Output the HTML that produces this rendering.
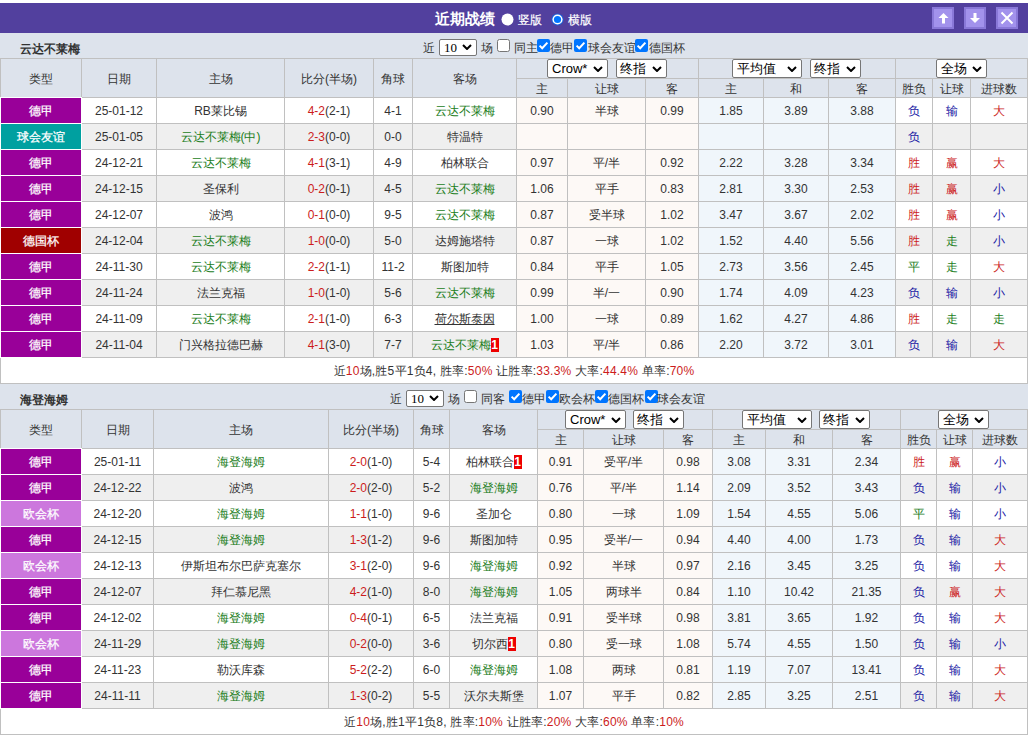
<!DOCTYPE html><html><head><meta charset="utf-8"><style>
*{margin:0;padding:0}
html,body{width:1030px;height:738px;overflow:hidden;background:#fff}
body{position:relative;font-family:"Liberation Sans",sans-serif;font-size:12px;color:#333}
body>div{position:absolute}
.t{text-align:center;white-space:nowrap;overflow:visible}
.bd{display:inline-block;background:#e00;color:#fff;font-weight:bold;height:14px;line-height:14px;width:8px;text-align:center;vertical-align:0px}
</style></head><body><div style="left:0px;top:3px;width:1028px;height:30px;background:#52409e;"></div>
<div class="t" style="left:435px;top:4px;height:30px;line-height:30px;text-align:left;font-weight:bold;font-size:15px;color:#fff;">近期战绩</div>
<svg style="position:absolute;left:501px;top:13px" width="13" height="13"><circle cx="6.5" cy="6.5" r="6" fill="#fff"/></svg>
<div class="t" style="left:518px;top:5px;height:30px;line-height:30px;text-align:left;color:#fff;-webkit-text-stroke:0.2px #fff;">竖版</div>
<svg style="position:absolute;left:551px;top:13px" width="13" height="13"><circle cx="6.5" cy="6.5" r="6.1" fill="#1a5ed6"/><circle cx="6.5" cy="6.5" r="5.1" fill="#fff"/><circle cx="6.5" cy="6.5" r="3.6" fill="#0075ff"/></svg>
<div class="t" style="left:568px;top:5px;height:30px;line-height:30px;text-align:left;color:#fff;-webkit-text-stroke:0.2px #fff;">横版</div>
<div style="left:932px;top:7px;width:22px;height:22px;background:#a292ec;border:2px solid #8978d8;box-sizing:border-box;"></div>
<div style="left:964px;top:7px;width:22px;height:22px;background:#a292ec;border:2px solid #8978d8;box-sizing:border-box;"></div>
<div style="left:996px;top:7px;width:22px;height:22px;background:#a292ec;border:2px solid #8978d8;box-sizing:border-box;"></div>
<svg style="position:absolute;left:932px;top:7px" width="22" height="22"><path d="M6.5 11 L11.5 6 L16.5 11 Z" fill="#fff"/><rect x="10" y="10.5" width="3" height="6" fill="#fff"/></svg>
<svg style="position:absolute;left:964px;top:7px" width="22" height="22"><path d="M6 11 L11 16 L16 11 Z" fill="#fff"/><rect x="9.5" y="6" width="3" height="5.5" fill="#fff"/></svg>
<svg style="position:absolute;left:996px;top:7px" width="22" height="22"><path d="M5.5 5.5 L16.5 16.5 M16.5 5.5 L5.5 16.5" stroke="#fff" stroke-width="2"/></svg>
<div style="left:0px;top:33px;width:1028px;height:25px;background:#dde3ec;"></div>
<div class="t" style="left:20px;top:37px;height:25px;line-height:25px;text-align:left;font-weight:bold;">云达不莱梅</div>
<div class="t" style="left:423px;top:40px;height:16px;line-height:16px;text-align:left;">近</div>
<div style="left:439px;top:39px;width:38px;height:17px;background:#fff;border:1px solid #767676;box-sizing:border-box;border-radius:2px;"></div>
<div class="t" style="left:444px;top:39px;height:17px;line-height:17px;font-size:13px;color:#000;text-align:left;font-family:'Liberation Serif',serif;font-size:13px;">10</div>
<svg style="position:absolute;left:462px;top:44px" width="10" height="6" viewBox="0 0 10 6"><path d="M1 1 L5 5 L9 1" fill="none" stroke="#000" stroke-width="2"/></svg>
<div class="t" style="left:481px;top:40px;height:16px;line-height:16px;text-align:left;">场</div>
<svg style="position:absolute;left:497px;top:39px" width="13" height="13" viewBox="0 0 13 13"><rect x="0.5" y="0.5" width="12" height="12" rx="2" fill="#fff" stroke="#767676"/></svg>
<div class="t" style="left:514px;top:40px;height:16px;line-height:16px;text-align:left;">同主</div>
<svg style="position:absolute;left:537px;top:39px" width="13" height="13" viewBox="0 0 13 13"><rect x="0" y="0" width="13" height="13" rx="2" fill="#0075ff"/><path d="M2.6 6.6 L5.2 9.2 L10.4 3.6" fill="none" stroke="#fff" stroke-width="2"/></svg>
<div class="t" style="left:550px;top:40px;height:16px;line-height:16px;text-align:left;">德甲</div>
<svg style="position:absolute;left:574px;top:39px" width="13" height="13" viewBox="0 0 13 13"><rect x="0" y="0" width="13" height="13" rx="2" fill="#0075ff"/><path d="M2.6 6.6 L5.2 9.2 L10.4 3.6" fill="none" stroke="#fff" stroke-width="2"/></svg>
<div class="t" style="left:588px;top:40px;height:16px;line-height:16px;text-align:left;">球会友谊</div>
<svg style="position:absolute;left:635px;top:39px" width="13" height="13" viewBox="0 0 13 13"><rect x="0" y="0" width="13" height="13" rx="2" fill="#0075ff"/><path d="M2.6 6.6 L5.2 9.2 L10.4 3.6" fill="none" stroke="#fff" stroke-width="2"/></svg>
<div class="t" style="left:649px;top:40px;height:16px;line-height:16px;text-align:left;">德国杯</div>
<div style="left:0px;top:58px;width:1028px;height:39px;background:#dde3ec;"></div>
<div class="t" style="left:1px;top:60px;width:80px;height:38px;line-height:38px;">类型</div>
<div class="t" style="left:82px;top:60px;width:74px;height:38px;line-height:38px;">日期</div>
<div class="t" style="left:157px;top:60px;width:127px;height:38px;line-height:38px;">主场</div>
<div class="t" style="left:285px;top:60px;width:88px;height:38px;line-height:38px;">比分(半场)</div>
<div class="t" style="left:374px;top:60px;width:38px;height:38px;line-height:38px;">角球</div>
<div class="t" style="left:413px;top:60px;width:103px;height:38px;line-height:38px;">客场</div>
<div class="t" style="left:517px;top:80px;width:50px;height:18px;line-height:18px;">主</div>
<div class="t" style="left:568px;top:80px;width:77px;height:18px;line-height:18px;">让球</div>
<div class="t" style="left:646px;top:80px;width:52px;height:18px;line-height:18px;">客</div>
<div class="t" style="left:699px;top:80px;width:64px;height:18px;line-height:18px;">主</div>
<div class="t" style="left:764px;top:80px;width:64px;height:18px;line-height:18px;">和</div>
<div class="t" style="left:829px;top:80px;width:66px;height:18px;line-height:18px;">客</div>
<div class="t" style="left:896px;top:80px;width:36px;height:18px;line-height:18px;">胜负</div>
<div class="t" style="left:933px;top:80px;width:37px;height:18px;line-height:18px;">让球</div>
<div class="t" style="left:971px;top:80px;width:56px;height:18px;line-height:18px;">进球数</div>
<div style="left:1px;top:98px;width:80px;height:25px;background:#990099;"></div>
<div style="left:82px;top:98px;width:74px;height:25px;background:#ffffff;"></div>
<div style="left:157px;top:98px;width:127px;height:25px;background:#ffffff;"></div>
<div style="left:285px;top:98px;width:88px;height:25px;background:#ffffff;"></div>
<div style="left:374px;top:98px;width:38px;height:25px;background:#ffffff;"></div>
<div style="left:413px;top:98px;width:103px;height:25px;background:#ffffff;"></div>
<div style="left:517px;top:98px;width:50px;height:25px;background:#fdf9f6;"></div>
<div style="left:568px;top:98px;width:77px;height:25px;background:#fdf9f6;"></div>
<div style="left:646px;top:98px;width:52px;height:25px;background:#fdf9f6;"></div>
<div style="left:699px;top:98px;width:64px;height:25px;background:#f0f6fb;"></div>
<div style="left:764px;top:98px;width:64px;height:25px;background:#f0f6fb;"></div>
<div style="left:829px;top:98px;width:66px;height:25px;background:#f0f6fb;"></div>
<div style="left:896px;top:98px;width:36px;height:25px;background:#ffffff;"></div>
<div style="left:933px;top:98px;width:37px;height:25px;background:#ffffff;"></div>
<div style="left:971px;top:98px;width:56px;height:25px;background:#ffffff;"></div>
<div class="t" style="left:1px;top:99px;width:80px;height:25px;line-height:25px;color:#fff;-webkit-text-stroke:0.25px #fff;">德甲</div>
<div class="t" style="left:82px;top:99px;width:74px;height:25px;line-height:25px;">25-01-12</div>
<div class="t" style="left:157px;top:99px;width:127px;height:25px;line-height:25px;">RB莱比锡</div>
<div class="t" style="left:285px;top:99px;width:88px;height:25px;line-height:25px;"><span style="color:#cc1c1c">4-2</span>(2-1)</div>
<div class="t" style="left:374px;top:99px;width:38px;height:25px;line-height:25px;">4-1</div>
<div class="t" style="left:413px;top:99px;width:103px;height:25px;line-height:25px;"><span style="color:#1a7d1a;">云达不莱梅</span></div>
<div class="t" style="left:517px;top:99px;width:50px;height:25px;line-height:25px;">0.90</div>
<div class="t" style="left:568px;top:99px;width:77px;height:25px;line-height:25px;">半球</div>
<div class="t" style="left:646px;top:99px;width:52px;height:25px;line-height:25px;">0.99</div>
<div class="t" style="left:699px;top:99px;width:64px;height:25px;line-height:25px;">1.85</div>
<div class="t" style="left:764px;top:99px;width:64px;height:25px;line-height:25px;">3.89</div>
<div class="t" style="left:829px;top:99px;width:66px;height:25px;line-height:25px;">3.88</div>
<div class="t" style="left:896px;top:99px;width:36px;height:25px;line-height:25px;color:#1818a4;">负</div>
<div class="t" style="left:933px;top:99px;width:37px;height:25px;line-height:25px;color:#1818a4;">输</div>
<div class="t" style="left:971px;top:99px;width:56px;height:25px;line-height:25px;color:#cc1c1c;">大</div>
<div style="left:1px;top:124px;width:80px;height:25px;background:#00a0a0;"></div>
<div style="left:82px;top:124px;width:74px;height:25px;background:#efefef;"></div>
<div style="left:157px;top:124px;width:127px;height:25px;background:#efefef;"></div>
<div style="left:285px;top:124px;width:88px;height:25px;background:#efefef;"></div>
<div style="left:374px;top:124px;width:38px;height:25px;background:#efefef;"></div>
<div style="left:413px;top:124px;width:103px;height:25px;background:#efefef;"></div>
<div style="left:517px;top:124px;width:50px;height:25px;background:#fdf9f6;"></div>
<div style="left:568px;top:124px;width:77px;height:25px;background:#fdf9f6;"></div>
<div style="left:646px;top:124px;width:52px;height:25px;background:#fdf9f6;"></div>
<div style="left:699px;top:124px;width:64px;height:25px;background:#f0f6fb;"></div>
<div style="left:764px;top:124px;width:64px;height:25px;background:#f0f6fb;"></div>
<div style="left:829px;top:124px;width:66px;height:25px;background:#f0f6fb;"></div>
<div style="left:896px;top:124px;width:36px;height:25px;background:#efefef;"></div>
<div style="left:933px;top:124px;width:37px;height:25px;background:#efefef;"></div>
<div style="left:971px;top:124px;width:56px;height:25px;background:#efefef;"></div>
<div class="t" style="left:1px;top:125px;width:80px;height:25px;line-height:25px;color:#fff;-webkit-text-stroke:0.25px #fff;">球会友谊</div>
<div class="t" style="left:82px;top:125px;width:74px;height:25px;line-height:25px;">25-01-05</div>
<div class="t" style="left:157px;top:125px;width:127px;height:25px;line-height:25px;"><span style="color:#1a7d1a;">云达不莱梅(中)</span></div>
<div class="t" style="left:285px;top:125px;width:88px;height:25px;line-height:25px;"><span style="color:#cc1c1c">2-3</span>(0-0)</div>
<div class="t" style="left:374px;top:125px;width:38px;height:25px;line-height:25px;">0-0</div>
<div class="t" style="left:413px;top:125px;width:103px;height:25px;line-height:25px;">特温特</div>
<div class="t" style="left:517px;top:125px;width:50px;height:25px;line-height:25px;"></div>
<div class="t" style="left:568px;top:125px;width:77px;height:25px;line-height:25px;"></div>
<div class="t" style="left:646px;top:125px;width:52px;height:25px;line-height:25px;"></div>
<div class="t" style="left:699px;top:125px;width:64px;height:25px;line-height:25px;"></div>
<div class="t" style="left:764px;top:125px;width:64px;height:25px;line-height:25px;"></div>
<div class="t" style="left:829px;top:125px;width:66px;height:25px;line-height:25px;"></div>
<div class="t" style="left:896px;top:125px;width:36px;height:25px;line-height:25px;color:#1818a4;">负</div>
<div class="t" style="left:933px;top:125px;width:37px;height:25px;line-height:25px;color:#333333;"></div>
<div class="t" style="left:971px;top:125px;width:56px;height:25px;line-height:25px;color:#333333;"></div>
<div style="left:1px;top:150px;width:80px;height:25px;background:#990099;"></div>
<div style="left:82px;top:150px;width:74px;height:25px;background:#ffffff;"></div>
<div style="left:157px;top:150px;width:127px;height:25px;background:#ffffff;"></div>
<div style="left:285px;top:150px;width:88px;height:25px;background:#ffffff;"></div>
<div style="left:374px;top:150px;width:38px;height:25px;background:#ffffff;"></div>
<div style="left:413px;top:150px;width:103px;height:25px;background:#ffffff;"></div>
<div style="left:517px;top:150px;width:50px;height:25px;background:#fdf9f6;"></div>
<div style="left:568px;top:150px;width:77px;height:25px;background:#fdf9f6;"></div>
<div style="left:646px;top:150px;width:52px;height:25px;background:#fdf9f6;"></div>
<div style="left:699px;top:150px;width:64px;height:25px;background:#f0f6fb;"></div>
<div style="left:764px;top:150px;width:64px;height:25px;background:#f0f6fb;"></div>
<div style="left:829px;top:150px;width:66px;height:25px;background:#f0f6fb;"></div>
<div style="left:896px;top:150px;width:36px;height:25px;background:#ffffff;"></div>
<div style="left:933px;top:150px;width:37px;height:25px;background:#ffffff;"></div>
<div style="left:971px;top:150px;width:56px;height:25px;background:#ffffff;"></div>
<div class="t" style="left:1px;top:151px;width:80px;height:25px;line-height:25px;color:#fff;-webkit-text-stroke:0.25px #fff;">德甲</div>
<div class="t" style="left:82px;top:151px;width:74px;height:25px;line-height:25px;">24-12-21</div>
<div class="t" style="left:157px;top:151px;width:127px;height:25px;line-height:25px;"><span style="color:#1a7d1a;">云达不莱梅</span></div>
<div class="t" style="left:285px;top:151px;width:88px;height:25px;line-height:25px;"><span style="color:#cc1c1c">4-1</span>(3-1)</div>
<div class="t" style="left:374px;top:151px;width:38px;height:25px;line-height:25px;">4-9</div>
<div class="t" style="left:413px;top:151px;width:103px;height:25px;line-height:25px;">柏林联合</div>
<div class="t" style="left:517px;top:151px;width:50px;height:25px;line-height:25px;">0.97</div>
<div class="t" style="left:568px;top:151px;width:77px;height:25px;line-height:25px;">平/半</div>
<div class="t" style="left:646px;top:151px;width:52px;height:25px;line-height:25px;">0.92</div>
<div class="t" style="left:699px;top:151px;width:64px;height:25px;line-height:25px;">2.22</div>
<div class="t" style="left:764px;top:151px;width:64px;height:25px;line-height:25px;">3.28</div>
<div class="t" style="left:829px;top:151px;width:66px;height:25px;line-height:25px;">3.34</div>
<div class="t" style="left:896px;top:151px;width:36px;height:25px;line-height:25px;color:#cc1c1c;">胜</div>
<div class="t" style="left:933px;top:151px;width:37px;height:25px;line-height:25px;color:#cc1c1c;">赢</div>
<div class="t" style="left:971px;top:151px;width:56px;height:25px;line-height:25px;color:#cc1c1c;">大</div>
<div style="left:1px;top:176px;width:80px;height:25px;background:#990099;"></div>
<div style="left:82px;top:176px;width:74px;height:25px;background:#efefef;"></div>
<div style="left:157px;top:176px;width:127px;height:25px;background:#efefef;"></div>
<div style="left:285px;top:176px;width:88px;height:25px;background:#efefef;"></div>
<div style="left:374px;top:176px;width:38px;height:25px;background:#efefef;"></div>
<div style="left:413px;top:176px;width:103px;height:25px;background:#efefef;"></div>
<div style="left:517px;top:176px;width:50px;height:25px;background:#fdf9f6;"></div>
<div style="left:568px;top:176px;width:77px;height:25px;background:#fdf9f6;"></div>
<div style="left:646px;top:176px;width:52px;height:25px;background:#fdf9f6;"></div>
<div style="left:699px;top:176px;width:64px;height:25px;background:#f0f6fb;"></div>
<div style="left:764px;top:176px;width:64px;height:25px;background:#f0f6fb;"></div>
<div style="left:829px;top:176px;width:66px;height:25px;background:#f0f6fb;"></div>
<div style="left:896px;top:176px;width:36px;height:25px;background:#efefef;"></div>
<div style="left:933px;top:176px;width:37px;height:25px;background:#efefef;"></div>
<div style="left:971px;top:176px;width:56px;height:25px;background:#efefef;"></div>
<div class="t" style="left:1px;top:177px;width:80px;height:25px;line-height:25px;color:#fff;-webkit-text-stroke:0.25px #fff;">德甲</div>
<div class="t" style="left:82px;top:177px;width:74px;height:25px;line-height:25px;">24-12-15</div>
<div class="t" style="left:157px;top:177px;width:127px;height:25px;line-height:25px;">圣保利</div>
<div class="t" style="left:285px;top:177px;width:88px;height:25px;line-height:25px;"><span style="color:#cc1c1c">0-2</span>(0-1)</div>
<div class="t" style="left:374px;top:177px;width:38px;height:25px;line-height:25px;">4-5</div>
<div class="t" style="left:413px;top:177px;width:103px;height:25px;line-height:25px;"><span style="color:#1a7d1a;">云达不莱梅</span></div>
<div class="t" style="left:517px;top:177px;width:50px;height:25px;line-height:25px;">1.06</div>
<div class="t" style="left:568px;top:177px;width:77px;height:25px;line-height:25px;">平手</div>
<div class="t" style="left:646px;top:177px;width:52px;height:25px;line-height:25px;">0.83</div>
<div class="t" style="left:699px;top:177px;width:64px;height:25px;line-height:25px;">2.81</div>
<div class="t" style="left:764px;top:177px;width:64px;height:25px;line-height:25px;">3.30</div>
<div class="t" style="left:829px;top:177px;width:66px;height:25px;line-height:25px;">2.53</div>
<div class="t" style="left:896px;top:177px;width:36px;height:25px;line-height:25px;color:#cc1c1c;">胜</div>
<div class="t" style="left:933px;top:177px;width:37px;height:25px;line-height:25px;color:#cc1c1c;">赢</div>
<div class="t" style="left:971px;top:177px;width:56px;height:25px;line-height:25px;color:#1818a4;">小</div>
<div style="left:1px;top:202px;width:80px;height:25px;background:#990099;"></div>
<div style="left:82px;top:202px;width:74px;height:25px;background:#ffffff;"></div>
<div style="left:157px;top:202px;width:127px;height:25px;background:#ffffff;"></div>
<div style="left:285px;top:202px;width:88px;height:25px;background:#ffffff;"></div>
<div style="left:374px;top:202px;width:38px;height:25px;background:#ffffff;"></div>
<div style="left:413px;top:202px;width:103px;height:25px;background:#ffffff;"></div>
<div style="left:517px;top:202px;width:50px;height:25px;background:#fdf9f6;"></div>
<div style="left:568px;top:202px;width:77px;height:25px;background:#fdf9f6;"></div>
<div style="left:646px;top:202px;width:52px;height:25px;background:#fdf9f6;"></div>
<div style="left:699px;top:202px;width:64px;height:25px;background:#f0f6fb;"></div>
<div style="left:764px;top:202px;width:64px;height:25px;background:#f0f6fb;"></div>
<div style="left:829px;top:202px;width:66px;height:25px;background:#f0f6fb;"></div>
<div style="left:896px;top:202px;width:36px;height:25px;background:#ffffff;"></div>
<div style="left:933px;top:202px;width:37px;height:25px;background:#ffffff;"></div>
<div style="left:971px;top:202px;width:56px;height:25px;background:#ffffff;"></div>
<div class="t" style="left:1px;top:203px;width:80px;height:25px;line-height:25px;color:#fff;-webkit-text-stroke:0.25px #fff;">德甲</div>
<div class="t" style="left:82px;top:203px;width:74px;height:25px;line-height:25px;">24-12-07</div>
<div class="t" style="left:157px;top:203px;width:127px;height:25px;line-height:25px;">波鸿</div>
<div class="t" style="left:285px;top:203px;width:88px;height:25px;line-height:25px;"><span style="color:#cc1c1c">0-1</span>(0-0)</div>
<div class="t" style="left:374px;top:203px;width:38px;height:25px;line-height:25px;">9-5</div>
<div class="t" style="left:413px;top:203px;width:103px;height:25px;line-height:25px;"><span style="color:#1a7d1a;">云达不莱梅</span></div>
<div class="t" style="left:517px;top:203px;width:50px;height:25px;line-height:25px;">0.87</div>
<div class="t" style="left:568px;top:203px;width:77px;height:25px;line-height:25px;">受半球</div>
<div class="t" style="left:646px;top:203px;width:52px;height:25px;line-height:25px;">1.02</div>
<div class="t" style="left:699px;top:203px;width:64px;height:25px;line-height:25px;">3.47</div>
<div class="t" style="left:764px;top:203px;width:64px;height:25px;line-height:25px;">3.67</div>
<div class="t" style="left:829px;top:203px;width:66px;height:25px;line-height:25px;">2.02</div>
<div class="t" style="left:896px;top:203px;width:36px;height:25px;line-height:25px;color:#cc1c1c;">胜</div>
<div class="t" style="left:933px;top:203px;width:37px;height:25px;line-height:25px;color:#cc1c1c;">赢</div>
<div class="t" style="left:971px;top:203px;width:56px;height:25px;line-height:25px;color:#1818a4;">小</div>
<div style="left:1px;top:228px;width:80px;height:25px;background:#a00000;"></div>
<div style="left:82px;top:228px;width:74px;height:25px;background:#efefef;"></div>
<div style="left:157px;top:228px;width:127px;height:25px;background:#efefef;"></div>
<div style="left:285px;top:228px;width:88px;height:25px;background:#efefef;"></div>
<div style="left:374px;top:228px;width:38px;height:25px;background:#efefef;"></div>
<div style="left:413px;top:228px;width:103px;height:25px;background:#efefef;"></div>
<div style="left:517px;top:228px;width:50px;height:25px;background:#fdf9f6;"></div>
<div style="left:568px;top:228px;width:77px;height:25px;background:#fdf9f6;"></div>
<div style="left:646px;top:228px;width:52px;height:25px;background:#fdf9f6;"></div>
<div style="left:699px;top:228px;width:64px;height:25px;background:#f0f6fb;"></div>
<div style="left:764px;top:228px;width:64px;height:25px;background:#f0f6fb;"></div>
<div style="left:829px;top:228px;width:66px;height:25px;background:#f0f6fb;"></div>
<div style="left:896px;top:228px;width:36px;height:25px;background:#efefef;"></div>
<div style="left:933px;top:228px;width:37px;height:25px;background:#efefef;"></div>
<div style="left:971px;top:228px;width:56px;height:25px;background:#efefef;"></div>
<div class="t" style="left:1px;top:229px;width:80px;height:25px;line-height:25px;color:#fff;-webkit-text-stroke:0.25px #fff;">德国杯</div>
<div class="t" style="left:82px;top:229px;width:74px;height:25px;line-height:25px;">24-12-04</div>
<div class="t" style="left:157px;top:229px;width:127px;height:25px;line-height:25px;"><span style="color:#1a7d1a;">云达不莱梅</span></div>
<div class="t" style="left:285px;top:229px;width:88px;height:25px;line-height:25px;"><span style="color:#cc1c1c">1-0</span>(0-0)</div>
<div class="t" style="left:374px;top:229px;width:38px;height:25px;line-height:25px;">5-0</div>
<div class="t" style="left:413px;top:229px;width:103px;height:25px;line-height:25px;">达姆施塔特</div>
<div class="t" style="left:517px;top:229px;width:50px;height:25px;line-height:25px;">0.87</div>
<div class="t" style="left:568px;top:229px;width:77px;height:25px;line-height:25px;">一球</div>
<div class="t" style="left:646px;top:229px;width:52px;height:25px;line-height:25px;">1.02</div>
<div class="t" style="left:699px;top:229px;width:64px;height:25px;line-height:25px;">1.52</div>
<div class="t" style="left:764px;top:229px;width:64px;height:25px;line-height:25px;">4.40</div>
<div class="t" style="left:829px;top:229px;width:66px;height:25px;line-height:25px;">5.56</div>
<div class="t" style="left:896px;top:229px;width:36px;height:25px;line-height:25px;color:#cc1c1c;">胜</div>
<div class="t" style="left:933px;top:229px;width:37px;height:25px;line-height:25px;color:#1a7d1a;">走</div>
<div class="t" style="left:971px;top:229px;width:56px;height:25px;line-height:25px;color:#1818a4;">小</div>
<div style="left:1px;top:254px;width:80px;height:25px;background:#990099;"></div>
<div style="left:82px;top:254px;width:74px;height:25px;background:#ffffff;"></div>
<div style="left:157px;top:254px;width:127px;height:25px;background:#ffffff;"></div>
<div style="left:285px;top:254px;width:88px;height:25px;background:#ffffff;"></div>
<div style="left:374px;top:254px;width:38px;height:25px;background:#ffffff;"></div>
<div style="left:413px;top:254px;width:103px;height:25px;background:#ffffff;"></div>
<div style="left:517px;top:254px;width:50px;height:25px;background:#fdf9f6;"></div>
<div style="left:568px;top:254px;width:77px;height:25px;background:#fdf9f6;"></div>
<div style="left:646px;top:254px;width:52px;height:25px;background:#fdf9f6;"></div>
<div style="left:699px;top:254px;width:64px;height:25px;background:#f0f6fb;"></div>
<div style="left:764px;top:254px;width:64px;height:25px;background:#f0f6fb;"></div>
<div style="left:829px;top:254px;width:66px;height:25px;background:#f0f6fb;"></div>
<div style="left:896px;top:254px;width:36px;height:25px;background:#ffffff;"></div>
<div style="left:933px;top:254px;width:37px;height:25px;background:#ffffff;"></div>
<div style="left:971px;top:254px;width:56px;height:25px;background:#ffffff;"></div>
<div class="t" style="left:1px;top:255px;width:80px;height:25px;line-height:25px;color:#fff;-webkit-text-stroke:0.25px #fff;">德甲</div>
<div class="t" style="left:82px;top:255px;width:74px;height:25px;line-height:25px;">24-11-30</div>
<div class="t" style="left:157px;top:255px;width:127px;height:25px;line-height:25px;"><span style="color:#1a7d1a;">云达不莱梅</span></div>
<div class="t" style="left:285px;top:255px;width:88px;height:25px;line-height:25px;"><span style="color:#cc1c1c">2-2</span>(1-1)</div>
<div class="t" style="left:374px;top:255px;width:38px;height:25px;line-height:25px;">11-2</div>
<div class="t" style="left:413px;top:255px;width:103px;height:25px;line-height:25px;">斯图加特</div>
<div class="t" style="left:517px;top:255px;width:50px;height:25px;line-height:25px;">0.84</div>
<div class="t" style="left:568px;top:255px;width:77px;height:25px;line-height:25px;">平手</div>
<div class="t" style="left:646px;top:255px;width:52px;height:25px;line-height:25px;">1.05</div>
<div class="t" style="left:699px;top:255px;width:64px;height:25px;line-height:25px;">2.73</div>
<div class="t" style="left:764px;top:255px;width:64px;height:25px;line-height:25px;">3.56</div>
<div class="t" style="left:829px;top:255px;width:66px;height:25px;line-height:25px;">2.45</div>
<div class="t" style="left:896px;top:255px;width:36px;height:25px;line-height:25px;color:#1a7d1a;">平</div>
<div class="t" style="left:933px;top:255px;width:37px;height:25px;line-height:25px;color:#1a7d1a;">走</div>
<div class="t" style="left:971px;top:255px;width:56px;height:25px;line-height:25px;color:#cc1c1c;">大</div>
<div style="left:1px;top:280px;width:80px;height:25px;background:#990099;"></div>
<div style="left:82px;top:280px;width:74px;height:25px;background:#efefef;"></div>
<div style="left:157px;top:280px;width:127px;height:25px;background:#efefef;"></div>
<div style="left:285px;top:280px;width:88px;height:25px;background:#efefef;"></div>
<div style="left:374px;top:280px;width:38px;height:25px;background:#efefef;"></div>
<div style="left:413px;top:280px;width:103px;height:25px;background:#efefef;"></div>
<div style="left:517px;top:280px;width:50px;height:25px;background:#fdf9f6;"></div>
<div style="left:568px;top:280px;width:77px;height:25px;background:#fdf9f6;"></div>
<div style="left:646px;top:280px;width:52px;height:25px;background:#fdf9f6;"></div>
<div style="left:699px;top:280px;width:64px;height:25px;background:#f0f6fb;"></div>
<div style="left:764px;top:280px;width:64px;height:25px;background:#f0f6fb;"></div>
<div style="left:829px;top:280px;width:66px;height:25px;background:#f0f6fb;"></div>
<div style="left:896px;top:280px;width:36px;height:25px;background:#efefef;"></div>
<div style="left:933px;top:280px;width:37px;height:25px;background:#efefef;"></div>
<div style="left:971px;top:280px;width:56px;height:25px;background:#efefef;"></div>
<div class="t" style="left:1px;top:281px;width:80px;height:25px;line-height:25px;color:#fff;-webkit-text-stroke:0.25px #fff;">德甲</div>
<div class="t" style="left:82px;top:281px;width:74px;height:25px;line-height:25px;">24-11-24</div>
<div class="t" style="left:157px;top:281px;width:127px;height:25px;line-height:25px;">法兰克福</div>
<div class="t" style="left:285px;top:281px;width:88px;height:25px;line-height:25px;"><span style="color:#cc1c1c">1-0</span>(1-0)</div>
<div class="t" style="left:374px;top:281px;width:38px;height:25px;line-height:25px;">5-6</div>
<div class="t" style="left:413px;top:281px;width:103px;height:25px;line-height:25px;"><span style="color:#1a7d1a;">云达不莱梅</span></div>
<div class="t" style="left:517px;top:281px;width:50px;height:25px;line-height:25px;">0.99</div>
<div class="t" style="left:568px;top:281px;width:77px;height:25px;line-height:25px;">半/一</div>
<div class="t" style="left:646px;top:281px;width:52px;height:25px;line-height:25px;">0.90</div>
<div class="t" style="left:699px;top:281px;width:64px;height:25px;line-height:25px;">1.74</div>
<div class="t" style="left:764px;top:281px;width:64px;height:25px;line-height:25px;">4.09</div>
<div class="t" style="left:829px;top:281px;width:66px;height:25px;line-height:25px;">4.23</div>
<div class="t" style="left:896px;top:281px;width:36px;height:25px;line-height:25px;color:#1818a4;">负</div>
<div class="t" style="left:933px;top:281px;width:37px;height:25px;line-height:25px;color:#1818a4;">输</div>
<div class="t" style="left:971px;top:281px;width:56px;height:25px;line-height:25px;color:#1818a4;">小</div>
<div style="left:1px;top:306px;width:80px;height:25px;background:#990099;"></div>
<div style="left:82px;top:306px;width:74px;height:25px;background:#ffffff;"></div>
<div style="left:157px;top:306px;width:127px;height:25px;background:#ffffff;"></div>
<div style="left:285px;top:306px;width:88px;height:25px;background:#ffffff;"></div>
<div style="left:374px;top:306px;width:38px;height:25px;background:#ffffff;"></div>
<div style="left:413px;top:306px;width:103px;height:25px;background:#ffffff;"></div>
<div style="left:517px;top:306px;width:50px;height:25px;background:#fdf9f6;"></div>
<div style="left:568px;top:306px;width:77px;height:25px;background:#fdf9f6;"></div>
<div style="left:646px;top:306px;width:52px;height:25px;background:#fdf9f6;"></div>
<div style="left:699px;top:306px;width:64px;height:25px;background:#f0f6fb;"></div>
<div style="left:764px;top:306px;width:64px;height:25px;background:#f0f6fb;"></div>
<div style="left:829px;top:306px;width:66px;height:25px;background:#f0f6fb;"></div>
<div style="left:896px;top:306px;width:36px;height:25px;background:#ffffff;"></div>
<div style="left:933px;top:306px;width:37px;height:25px;background:#ffffff;"></div>
<div style="left:971px;top:306px;width:56px;height:25px;background:#ffffff;"></div>
<div class="t" style="left:1px;top:307px;width:80px;height:25px;line-height:25px;color:#fff;-webkit-text-stroke:0.25px #fff;">德甲</div>
<div class="t" style="left:82px;top:307px;width:74px;height:25px;line-height:25px;">24-11-09</div>
<div class="t" style="left:157px;top:307px;width:127px;height:25px;line-height:25px;"><span style="color:#1a7d1a;">云达不莱梅</span></div>
<div class="t" style="left:285px;top:307px;width:88px;height:25px;line-height:25px;"><span style="color:#cc1c1c">2-1</span>(1-0)</div>
<div class="t" style="left:374px;top:307px;width:38px;height:25px;line-height:25px;">6-3</div>
<div class="t" style="left:413px;top:307px;width:103px;height:25px;line-height:25px;"><span style="text-decoration:underline;">荷尔斯泰因</span></div>
<div class="t" style="left:517px;top:307px;width:50px;height:25px;line-height:25px;">1.00</div>
<div class="t" style="left:568px;top:307px;width:77px;height:25px;line-height:25px;">一球</div>
<div class="t" style="left:646px;top:307px;width:52px;height:25px;line-height:25px;">0.89</div>
<div class="t" style="left:699px;top:307px;width:64px;height:25px;line-height:25px;">1.62</div>
<div class="t" style="left:764px;top:307px;width:64px;height:25px;line-height:25px;">4.27</div>
<div class="t" style="left:829px;top:307px;width:66px;height:25px;line-height:25px;">4.86</div>
<div class="t" style="left:896px;top:307px;width:36px;height:25px;line-height:25px;color:#cc1c1c;">胜</div>
<div class="t" style="left:933px;top:307px;width:37px;height:25px;line-height:25px;color:#1a7d1a;">走</div>
<div class="t" style="left:971px;top:307px;width:56px;height:25px;line-height:25px;color:#1a7d1a;">走</div>
<div style="left:1px;top:332px;width:80px;height:25px;background:#990099;"></div>
<div style="left:82px;top:332px;width:74px;height:25px;background:#efefef;"></div>
<div style="left:157px;top:332px;width:127px;height:25px;background:#efefef;"></div>
<div style="left:285px;top:332px;width:88px;height:25px;background:#efefef;"></div>
<div style="left:374px;top:332px;width:38px;height:25px;background:#efefef;"></div>
<div style="left:413px;top:332px;width:103px;height:25px;background:#efefef;"></div>
<div style="left:517px;top:332px;width:50px;height:25px;background:#fdf9f6;"></div>
<div style="left:568px;top:332px;width:77px;height:25px;background:#fdf9f6;"></div>
<div style="left:646px;top:332px;width:52px;height:25px;background:#fdf9f6;"></div>
<div style="left:699px;top:332px;width:64px;height:25px;background:#f0f6fb;"></div>
<div style="left:764px;top:332px;width:64px;height:25px;background:#f0f6fb;"></div>
<div style="left:829px;top:332px;width:66px;height:25px;background:#f0f6fb;"></div>
<div style="left:896px;top:332px;width:36px;height:25px;background:#efefef;"></div>
<div style="left:933px;top:332px;width:37px;height:25px;background:#efefef;"></div>
<div style="left:971px;top:332px;width:56px;height:25px;background:#efefef;"></div>
<div class="t" style="left:1px;top:333px;width:80px;height:25px;line-height:25px;color:#fff;-webkit-text-stroke:0.25px #fff;">德甲</div>
<div class="t" style="left:82px;top:333px;width:74px;height:25px;line-height:25px;">24-11-04</div>
<div class="t" style="left:157px;top:333px;width:127px;height:25px;line-height:25px;">门兴格拉德巴赫</div>
<div class="t" style="left:285px;top:333px;width:88px;height:25px;line-height:25px;"><span style="color:#cc1c1c">4-1</span>(3-0)</div>
<div class="t" style="left:374px;top:333px;width:38px;height:25px;line-height:25px;">7-7</div>
<div class="t" style="left:413px;top:333px;width:103px;height:25px;line-height:25px;"><span style="color:#1a7d1a;">云达不莱梅</span><span class="bd">1</span></div>
<div class="t" style="left:517px;top:333px;width:50px;height:25px;line-height:25px;">1.03</div>
<div class="t" style="left:568px;top:333px;width:77px;height:25px;line-height:25px;">平/半</div>
<div class="t" style="left:646px;top:333px;width:52px;height:25px;line-height:25px;">0.86</div>
<div class="t" style="left:699px;top:333px;width:64px;height:25px;line-height:25px;">2.20</div>
<div class="t" style="left:764px;top:333px;width:64px;height:25px;line-height:25px;">3.72</div>
<div class="t" style="left:829px;top:333px;width:66px;height:25px;line-height:25px;">3.01</div>
<div class="t" style="left:896px;top:333px;width:36px;height:25px;line-height:25px;color:#1818a4;">负</div>
<div class="t" style="left:933px;top:333px;width:37px;height:25px;line-height:25px;color:#1818a4;">输</div>
<div class="t" style="left:971px;top:333px;width:56px;height:25px;line-height:25px;color:#cc1c1c;">大</div>
<div style="left:1px;top:358px;width:1026px;height:25px;background:#fff;"></div>
<div class="t" style="left:1px;top:359px;width:1026px;height:25px;line-height:25px;letter-spacing:0.22px;">近<span style="color:#cc1c1c">10</span>场,胜5平1负4, 胜率:<span style="color:#cc1c1c">50%</span> 让胜率:<span style="color:#cc1c1c">33.3%</span> 大率:<span style="color:#cc1c1c">44.4%</span> 单率:<span style="color:#cc1c1c">70%</span></div>
<div style="left:0px;top:58px;width:1028px;height:1px;background:#c0c0c0;"></div>
<div style="left:0px;top:97px;width:1028px;height:1px;background:#c0c0c0;"></div>
<div style="left:516px;top:78px;width:512px;height:1px;background:#c0c0c0;"></div>
<div style="left:0px;top:123px;width:1028px;height:1px;background:#c0c0c0;"></div>
<div style="left:0px;top:149px;width:1028px;height:1px;background:#c0c0c0;"></div>
<div style="left:0px;top:175px;width:1028px;height:1px;background:#c0c0c0;"></div>
<div style="left:0px;top:201px;width:1028px;height:1px;background:#c0c0c0;"></div>
<div style="left:0px;top:227px;width:1028px;height:1px;background:#c0c0c0;"></div>
<div style="left:0px;top:253px;width:1028px;height:1px;background:#c0c0c0;"></div>
<div style="left:0px;top:279px;width:1028px;height:1px;background:#c0c0c0;"></div>
<div style="left:0px;top:305px;width:1028px;height:1px;background:#c0c0c0;"></div>
<div style="left:0px;top:331px;width:1028px;height:1px;background:#c0c0c0;"></div>
<div style="left:0px;top:357px;width:1028px;height:1px;background:#c0c0c0;"></div>
<div style="left:0px;top:383px;width:1028px;height:1px;background:#c0c0c0;"></div>
<div style="left:0px;top:58px;width:1px;height:326px;background:#c0c0c0;"></div>
<div style="left:1027px;top:58px;width:1px;height:326px;background:#c0c0c0;"></div>
<div style="left:81px;top:58px;width:1px;height:300px;background:#c0c0c0;"></div>
<div style="left:156px;top:58px;width:1px;height:300px;background:#c0c0c0;"></div>
<div style="left:284px;top:58px;width:1px;height:300px;background:#c0c0c0;"></div>
<div style="left:373px;top:58px;width:1px;height:300px;background:#c0c0c0;"></div>
<div style="left:412px;top:58px;width:1px;height:300px;background:#c0c0c0;"></div>
<div style="left:516px;top:58px;width:1px;height:300px;background:#c0c0c0;"></div>
<div style="left:567px;top:78px;width:1px;height:280px;background:#c0c0c0;"></div>
<div style="left:645px;top:78px;width:1px;height:280px;background:#c0c0c0;"></div>
<div style="left:698px;top:58px;width:1px;height:300px;background:#c0c0c0;"></div>
<div style="left:763px;top:78px;width:1px;height:280px;background:#c0c0c0;"></div>
<div style="left:828px;top:78px;width:1px;height:280px;background:#c0c0c0;"></div>
<div style="left:895px;top:58px;width:1px;height:300px;background:#c0c0c0;"></div>
<div style="left:932px;top:78px;width:1px;height:280px;background:#c0c0c0;"></div>
<div style="left:970px;top:78px;width:1px;height:280px;background:#c0c0c0;"></div>
<div style="left:0px;top:97px;width:82px;height:1px;background:#ffffff;"></div>
<div style="left:0px;top:123px;width:82px;height:1px;background:#ffffff;"></div>
<div style="left:0px;top:97px;width:1px;height:27px;background:#ffffff;"></div>
<div style="left:81px;top:97px;width:1px;height:27px;background:#ffffff;"></div>
<div style="left:0px;top:123px;width:82px;height:1px;background:#ffffff;"></div>
<div style="left:0px;top:149px;width:82px;height:1px;background:#ffffff;"></div>
<div style="left:0px;top:123px;width:1px;height:27px;background:#ffffff;"></div>
<div style="left:81px;top:123px;width:1px;height:27px;background:#ffffff;"></div>
<div style="left:0px;top:149px;width:82px;height:1px;background:#ffffff;"></div>
<div style="left:0px;top:175px;width:82px;height:1px;background:#ffffff;"></div>
<div style="left:0px;top:149px;width:1px;height:27px;background:#ffffff;"></div>
<div style="left:81px;top:149px;width:1px;height:27px;background:#ffffff;"></div>
<div style="left:0px;top:175px;width:82px;height:1px;background:#ffffff;"></div>
<div style="left:0px;top:201px;width:82px;height:1px;background:#ffffff;"></div>
<div style="left:0px;top:175px;width:1px;height:27px;background:#ffffff;"></div>
<div style="left:81px;top:175px;width:1px;height:27px;background:#ffffff;"></div>
<div style="left:0px;top:201px;width:82px;height:1px;background:#ffffff;"></div>
<div style="left:0px;top:227px;width:82px;height:1px;background:#ffffff;"></div>
<div style="left:0px;top:201px;width:1px;height:27px;background:#ffffff;"></div>
<div style="left:81px;top:201px;width:1px;height:27px;background:#ffffff;"></div>
<div style="left:0px;top:227px;width:82px;height:1px;background:#ffffff;"></div>
<div style="left:0px;top:253px;width:82px;height:1px;background:#ffffff;"></div>
<div style="left:0px;top:227px;width:1px;height:27px;background:#ffffff;"></div>
<div style="left:81px;top:227px;width:1px;height:27px;background:#ffffff;"></div>
<div style="left:0px;top:253px;width:82px;height:1px;background:#ffffff;"></div>
<div style="left:0px;top:279px;width:82px;height:1px;background:#ffffff;"></div>
<div style="left:0px;top:253px;width:1px;height:27px;background:#ffffff;"></div>
<div style="left:81px;top:253px;width:1px;height:27px;background:#ffffff;"></div>
<div style="left:0px;top:279px;width:82px;height:1px;background:#ffffff;"></div>
<div style="left:0px;top:305px;width:82px;height:1px;background:#ffffff;"></div>
<div style="left:0px;top:279px;width:1px;height:27px;background:#ffffff;"></div>
<div style="left:81px;top:279px;width:1px;height:27px;background:#ffffff;"></div>
<div style="left:0px;top:305px;width:82px;height:1px;background:#ffffff;"></div>
<div style="left:0px;top:331px;width:82px;height:1px;background:#ffffff;"></div>
<div style="left:0px;top:305px;width:1px;height:27px;background:#ffffff;"></div>
<div style="left:81px;top:305px;width:1px;height:27px;background:#ffffff;"></div>
<div style="left:0px;top:331px;width:82px;height:1px;background:#ffffff;"></div>
<div style="left:0px;top:357px;width:82px;height:1px;background:#ffffff;"></div>
<div style="left:0px;top:331px;width:1px;height:27px;background:#ffffff;"></div>
<div style="left:81px;top:331px;width:1px;height:27px;background:#ffffff;"></div>
<div style="left:0px;top:384px;width:1028px;height:25px;background:#dde3ec;"></div>
<div class="t" style="left:20px;top:388px;height:25px;line-height:25px;text-align:left;font-weight:bold;">海登海姆</div>
<div class="t" style="left:390px;top:391px;height:16px;line-height:16px;text-align:left;">近</div>
<div style="left:406px;top:390px;width:38px;height:17px;background:#fff;border:1px solid #767676;box-sizing:border-box;border-radius:2px;"></div>
<div class="t" style="left:411px;top:390px;height:17px;line-height:17px;font-size:13px;color:#000;text-align:left;font-family:'Liberation Serif',serif;font-size:13px;">10</div>
<svg style="position:absolute;left:429px;top:395px" width="10" height="6" viewBox="0 0 10 6"><path d="M1 1 L5 5 L9 1" fill="none" stroke="#000" stroke-width="2"/></svg>
<div class="t" style="left:448px;top:391px;height:16px;line-height:16px;text-align:left;">场</div>
<svg style="position:absolute;left:464px;top:390px" width="13" height="13" viewBox="0 0 13 13"><rect x="0.5" y="0.5" width="12" height="12" rx="2" fill="#fff" stroke="#767676"/></svg>
<div class="t" style="left:481px;top:391px;height:16px;line-height:16px;text-align:left;">同客</div>
<svg style="position:absolute;left:509px;top:390px" width="13" height="13" viewBox="0 0 13 13"><rect x="0" y="0" width="13" height="13" rx="2" fill="#0075ff"/><path d="M2.6 6.6 L5.2 9.2 L10.4 3.6" fill="none" stroke="#fff" stroke-width="2"/></svg>
<div class="t" style="left:522px;top:391px;height:16px;line-height:16px;text-align:left;">德甲</div>
<svg style="position:absolute;left:546px;top:390px" width="13" height="13" viewBox="0 0 13 13"><rect x="0" y="0" width="13" height="13" rx="2" fill="#0075ff"/><path d="M2.6 6.6 L5.2 9.2 L10.4 3.6" fill="none" stroke="#fff" stroke-width="2"/></svg>
<div class="t" style="left:559px;top:391px;height:16px;line-height:16px;text-align:left;">欧会杯</div>
<svg style="position:absolute;left:595px;top:390px" width="13" height="13" viewBox="0 0 13 13"><rect x="0" y="0" width="13" height="13" rx="2" fill="#0075ff"/><path d="M2.6 6.6 L5.2 9.2 L10.4 3.6" fill="none" stroke="#fff" stroke-width="2"/></svg>
<div class="t" style="left:608px;top:391px;height:16px;line-height:16px;text-align:left;">德国杯</div>
<svg style="position:absolute;left:645px;top:390px" width="13" height="13" viewBox="0 0 13 13"><rect x="0" y="0" width="13" height="13" rx="2" fill="#0075ff"/><path d="M2.6 6.6 L5.2 9.2 L10.4 3.6" fill="none" stroke="#fff" stroke-width="2"/></svg>
<div class="t" style="left:657px;top:391px;height:16px;line-height:16px;text-align:left;">球会友谊</div>
<div style="left:0px;top:409px;width:1028px;height:39px;background:#dde3ec;"></div>
<div class="t" style="left:1px;top:411px;width:80px;height:38px;line-height:38px;">类型</div>
<div class="t" style="left:82px;top:411px;width:71px;height:38px;line-height:38px;">日期</div>
<div class="t" style="left:154px;top:411px;width:174px;height:38px;line-height:38px;">主场</div>
<div class="t" style="left:329px;top:411px;width:84px;height:38px;line-height:38px;">比分(半场)</div>
<div class="t" style="left:414px;top:411px;width:35px;height:38px;line-height:38px;">角球</div>
<div class="t" style="left:450px;top:411px;width:87px;height:38px;line-height:38px;">客场</div>
<div class="t" style="left:538px;top:431px;width:45px;height:18px;line-height:18px;">主</div>
<div class="t" style="left:584px;top:431px;width:79px;height:18px;line-height:18px;">让球</div>
<div class="t" style="left:664px;top:431px;width:48px;height:18px;line-height:18px;">客</div>
<div class="t" style="left:713px;top:431px;width:52px;height:18px;line-height:18px;">主</div>
<div class="t" style="left:766px;top:431px;width:66px;height:18px;line-height:18px;">和</div>
<div class="t" style="left:833px;top:431px;width:67px;height:18px;line-height:18px;">客</div>
<div class="t" style="left:901px;top:431px;width:35px;height:18px;line-height:18px;">胜负</div>
<div class="t" style="left:937px;top:431px;width:35px;height:18px;line-height:18px;">让球</div>
<div class="t" style="left:973px;top:431px;width:54px;height:18px;line-height:18px;">进球数</div>
<div style="left:1px;top:449px;width:80px;height:25px;background:#990099;"></div>
<div style="left:82px;top:449px;width:71px;height:25px;background:#ffffff;"></div>
<div style="left:154px;top:449px;width:174px;height:25px;background:#ffffff;"></div>
<div style="left:329px;top:449px;width:84px;height:25px;background:#ffffff;"></div>
<div style="left:414px;top:449px;width:35px;height:25px;background:#ffffff;"></div>
<div style="left:450px;top:449px;width:87px;height:25px;background:#ffffff;"></div>
<div style="left:538px;top:449px;width:45px;height:25px;background:#fdf9f6;"></div>
<div style="left:584px;top:449px;width:79px;height:25px;background:#fdf9f6;"></div>
<div style="left:664px;top:449px;width:48px;height:25px;background:#fdf9f6;"></div>
<div style="left:713px;top:449px;width:52px;height:25px;background:#f0f6fb;"></div>
<div style="left:766px;top:449px;width:66px;height:25px;background:#f0f6fb;"></div>
<div style="left:833px;top:449px;width:67px;height:25px;background:#f0f6fb;"></div>
<div style="left:901px;top:449px;width:35px;height:25px;background:#ffffff;"></div>
<div style="left:937px;top:449px;width:35px;height:25px;background:#ffffff;"></div>
<div style="left:973px;top:449px;width:54px;height:25px;background:#ffffff;"></div>
<div class="t" style="left:1px;top:450px;width:80px;height:25px;line-height:25px;color:#fff;-webkit-text-stroke:0.25px #fff;">德甲</div>
<div class="t" style="left:82px;top:450px;width:71px;height:25px;line-height:25px;">25-01-11</div>
<div class="t" style="left:154px;top:450px;width:174px;height:25px;line-height:25px;"><span style="color:#1a7d1a;">海登海姆</span></div>
<div class="t" style="left:329px;top:450px;width:84px;height:25px;line-height:25px;"><span style="color:#cc1c1c">2-0</span>(1-0)</div>
<div class="t" style="left:414px;top:450px;width:35px;height:25px;line-height:25px;">5-4</div>
<div class="t" style="left:450px;top:450px;width:87px;height:25px;line-height:25px;"><span style="">柏林联合</span><span class="bd">1</span></div>
<div class="t" style="left:538px;top:450px;width:45px;height:25px;line-height:25px;">0.91</div>
<div class="t" style="left:584px;top:450px;width:79px;height:25px;line-height:25px;">受平/半</div>
<div class="t" style="left:664px;top:450px;width:48px;height:25px;line-height:25px;">0.98</div>
<div class="t" style="left:713px;top:450px;width:52px;height:25px;line-height:25px;">3.08</div>
<div class="t" style="left:766px;top:450px;width:66px;height:25px;line-height:25px;">3.31</div>
<div class="t" style="left:833px;top:450px;width:67px;height:25px;line-height:25px;">2.34</div>
<div class="t" style="left:901px;top:450px;width:35px;height:25px;line-height:25px;color:#cc1c1c;">胜</div>
<div class="t" style="left:937px;top:450px;width:35px;height:25px;line-height:25px;color:#cc1c1c;">赢</div>
<div class="t" style="left:973px;top:450px;width:54px;height:25px;line-height:25px;color:#1818a4;">小</div>
<div style="left:1px;top:475px;width:80px;height:25px;background:#990099;"></div>
<div style="left:82px;top:475px;width:71px;height:25px;background:#efefef;"></div>
<div style="left:154px;top:475px;width:174px;height:25px;background:#efefef;"></div>
<div style="left:329px;top:475px;width:84px;height:25px;background:#efefef;"></div>
<div style="left:414px;top:475px;width:35px;height:25px;background:#efefef;"></div>
<div style="left:450px;top:475px;width:87px;height:25px;background:#efefef;"></div>
<div style="left:538px;top:475px;width:45px;height:25px;background:#fdf9f6;"></div>
<div style="left:584px;top:475px;width:79px;height:25px;background:#fdf9f6;"></div>
<div style="left:664px;top:475px;width:48px;height:25px;background:#fdf9f6;"></div>
<div style="left:713px;top:475px;width:52px;height:25px;background:#f0f6fb;"></div>
<div style="left:766px;top:475px;width:66px;height:25px;background:#f0f6fb;"></div>
<div style="left:833px;top:475px;width:67px;height:25px;background:#f0f6fb;"></div>
<div style="left:901px;top:475px;width:35px;height:25px;background:#efefef;"></div>
<div style="left:937px;top:475px;width:35px;height:25px;background:#efefef;"></div>
<div style="left:973px;top:475px;width:54px;height:25px;background:#efefef;"></div>
<div class="t" style="left:1px;top:476px;width:80px;height:25px;line-height:25px;color:#fff;-webkit-text-stroke:0.25px #fff;">德甲</div>
<div class="t" style="left:82px;top:476px;width:71px;height:25px;line-height:25px;">24-12-22</div>
<div class="t" style="left:154px;top:476px;width:174px;height:25px;line-height:25px;">波鸿</div>
<div class="t" style="left:329px;top:476px;width:84px;height:25px;line-height:25px;"><span style="color:#cc1c1c">2-0</span>(2-0)</div>
<div class="t" style="left:414px;top:476px;width:35px;height:25px;line-height:25px;">5-2</div>
<div class="t" style="left:450px;top:476px;width:87px;height:25px;line-height:25px;"><span style="color:#1a7d1a;">海登海姆</span></div>
<div class="t" style="left:538px;top:476px;width:45px;height:25px;line-height:25px;">0.76</div>
<div class="t" style="left:584px;top:476px;width:79px;height:25px;line-height:25px;">平/半</div>
<div class="t" style="left:664px;top:476px;width:48px;height:25px;line-height:25px;">1.14</div>
<div class="t" style="left:713px;top:476px;width:52px;height:25px;line-height:25px;">2.09</div>
<div class="t" style="left:766px;top:476px;width:66px;height:25px;line-height:25px;">3.52</div>
<div class="t" style="left:833px;top:476px;width:67px;height:25px;line-height:25px;">3.43</div>
<div class="t" style="left:901px;top:476px;width:35px;height:25px;line-height:25px;color:#1818a4;">负</div>
<div class="t" style="left:937px;top:476px;width:35px;height:25px;line-height:25px;color:#1818a4;">输</div>
<div class="t" style="left:973px;top:476px;width:54px;height:25px;line-height:25px;color:#1818a4;">小</div>
<div style="left:1px;top:501px;width:80px;height:25px;background:#cc77dd;"></div>
<div style="left:82px;top:501px;width:71px;height:25px;background:#ffffff;"></div>
<div style="left:154px;top:501px;width:174px;height:25px;background:#ffffff;"></div>
<div style="left:329px;top:501px;width:84px;height:25px;background:#ffffff;"></div>
<div style="left:414px;top:501px;width:35px;height:25px;background:#ffffff;"></div>
<div style="left:450px;top:501px;width:87px;height:25px;background:#ffffff;"></div>
<div style="left:538px;top:501px;width:45px;height:25px;background:#fdf9f6;"></div>
<div style="left:584px;top:501px;width:79px;height:25px;background:#fdf9f6;"></div>
<div style="left:664px;top:501px;width:48px;height:25px;background:#fdf9f6;"></div>
<div style="left:713px;top:501px;width:52px;height:25px;background:#f0f6fb;"></div>
<div style="left:766px;top:501px;width:66px;height:25px;background:#f0f6fb;"></div>
<div style="left:833px;top:501px;width:67px;height:25px;background:#f0f6fb;"></div>
<div style="left:901px;top:501px;width:35px;height:25px;background:#ffffff;"></div>
<div style="left:937px;top:501px;width:35px;height:25px;background:#ffffff;"></div>
<div style="left:973px;top:501px;width:54px;height:25px;background:#ffffff;"></div>
<div class="t" style="left:1px;top:502px;width:80px;height:25px;line-height:25px;color:#fff;-webkit-text-stroke:0.25px #fff;">欧会杯</div>
<div class="t" style="left:82px;top:502px;width:71px;height:25px;line-height:25px;">24-12-20</div>
<div class="t" style="left:154px;top:502px;width:174px;height:25px;line-height:25px;"><span style="color:#1a7d1a;">海登海姆</span></div>
<div class="t" style="left:329px;top:502px;width:84px;height:25px;line-height:25px;"><span style="color:#cc1c1c">1-1</span>(1-0)</div>
<div class="t" style="left:414px;top:502px;width:35px;height:25px;line-height:25px;">9-6</div>
<div class="t" style="left:450px;top:502px;width:87px;height:25px;line-height:25px;">圣加仑</div>
<div class="t" style="left:538px;top:502px;width:45px;height:25px;line-height:25px;">0.80</div>
<div class="t" style="left:584px;top:502px;width:79px;height:25px;line-height:25px;">一球</div>
<div class="t" style="left:664px;top:502px;width:48px;height:25px;line-height:25px;">1.09</div>
<div class="t" style="left:713px;top:502px;width:52px;height:25px;line-height:25px;">1.54</div>
<div class="t" style="left:766px;top:502px;width:66px;height:25px;line-height:25px;">4.55</div>
<div class="t" style="left:833px;top:502px;width:67px;height:25px;line-height:25px;">5.06</div>
<div class="t" style="left:901px;top:502px;width:35px;height:25px;line-height:25px;color:#1a7d1a;">平</div>
<div class="t" style="left:937px;top:502px;width:35px;height:25px;line-height:25px;color:#1818a4;">输</div>
<div class="t" style="left:973px;top:502px;width:54px;height:25px;line-height:25px;color:#1818a4;">小</div>
<div style="left:1px;top:527px;width:80px;height:25px;background:#990099;"></div>
<div style="left:82px;top:527px;width:71px;height:25px;background:#efefef;"></div>
<div style="left:154px;top:527px;width:174px;height:25px;background:#efefef;"></div>
<div style="left:329px;top:527px;width:84px;height:25px;background:#efefef;"></div>
<div style="left:414px;top:527px;width:35px;height:25px;background:#efefef;"></div>
<div style="left:450px;top:527px;width:87px;height:25px;background:#efefef;"></div>
<div style="left:538px;top:527px;width:45px;height:25px;background:#fdf9f6;"></div>
<div style="left:584px;top:527px;width:79px;height:25px;background:#fdf9f6;"></div>
<div style="left:664px;top:527px;width:48px;height:25px;background:#fdf9f6;"></div>
<div style="left:713px;top:527px;width:52px;height:25px;background:#f0f6fb;"></div>
<div style="left:766px;top:527px;width:66px;height:25px;background:#f0f6fb;"></div>
<div style="left:833px;top:527px;width:67px;height:25px;background:#f0f6fb;"></div>
<div style="left:901px;top:527px;width:35px;height:25px;background:#efefef;"></div>
<div style="left:937px;top:527px;width:35px;height:25px;background:#efefef;"></div>
<div style="left:973px;top:527px;width:54px;height:25px;background:#efefef;"></div>
<div class="t" style="left:1px;top:528px;width:80px;height:25px;line-height:25px;color:#fff;-webkit-text-stroke:0.25px #fff;">德甲</div>
<div class="t" style="left:82px;top:528px;width:71px;height:25px;line-height:25px;">24-12-15</div>
<div class="t" style="left:154px;top:528px;width:174px;height:25px;line-height:25px;"><span style="color:#1a7d1a;">海登海姆</span></div>
<div class="t" style="left:329px;top:528px;width:84px;height:25px;line-height:25px;"><span style="color:#cc1c1c">1-3</span>(1-2)</div>
<div class="t" style="left:414px;top:528px;width:35px;height:25px;line-height:25px;">9-6</div>
<div class="t" style="left:450px;top:528px;width:87px;height:25px;line-height:25px;">斯图加特</div>
<div class="t" style="left:538px;top:528px;width:45px;height:25px;line-height:25px;">0.95</div>
<div class="t" style="left:584px;top:528px;width:79px;height:25px;line-height:25px;">受半/一</div>
<div class="t" style="left:664px;top:528px;width:48px;height:25px;line-height:25px;">0.94</div>
<div class="t" style="left:713px;top:528px;width:52px;height:25px;line-height:25px;">4.40</div>
<div class="t" style="left:766px;top:528px;width:66px;height:25px;line-height:25px;">4.00</div>
<div class="t" style="left:833px;top:528px;width:67px;height:25px;line-height:25px;">1.73</div>
<div class="t" style="left:901px;top:528px;width:35px;height:25px;line-height:25px;color:#1818a4;">负</div>
<div class="t" style="left:937px;top:528px;width:35px;height:25px;line-height:25px;color:#1818a4;">输</div>
<div class="t" style="left:973px;top:528px;width:54px;height:25px;line-height:25px;color:#cc1c1c;">大</div>
<div style="left:1px;top:553px;width:80px;height:25px;background:#cc77dd;"></div>
<div style="left:82px;top:553px;width:71px;height:25px;background:#ffffff;"></div>
<div style="left:154px;top:553px;width:174px;height:25px;background:#ffffff;"></div>
<div style="left:329px;top:553px;width:84px;height:25px;background:#ffffff;"></div>
<div style="left:414px;top:553px;width:35px;height:25px;background:#ffffff;"></div>
<div style="left:450px;top:553px;width:87px;height:25px;background:#ffffff;"></div>
<div style="left:538px;top:553px;width:45px;height:25px;background:#fdf9f6;"></div>
<div style="left:584px;top:553px;width:79px;height:25px;background:#fdf9f6;"></div>
<div style="left:664px;top:553px;width:48px;height:25px;background:#fdf9f6;"></div>
<div style="left:713px;top:553px;width:52px;height:25px;background:#f0f6fb;"></div>
<div style="left:766px;top:553px;width:66px;height:25px;background:#f0f6fb;"></div>
<div style="left:833px;top:553px;width:67px;height:25px;background:#f0f6fb;"></div>
<div style="left:901px;top:553px;width:35px;height:25px;background:#ffffff;"></div>
<div style="left:937px;top:553px;width:35px;height:25px;background:#ffffff;"></div>
<div style="left:973px;top:553px;width:54px;height:25px;background:#ffffff;"></div>
<div class="t" style="left:1px;top:554px;width:80px;height:25px;line-height:25px;color:#fff;-webkit-text-stroke:0.25px #fff;">欧会杯</div>
<div class="t" style="left:82px;top:554px;width:71px;height:25px;line-height:25px;">24-12-13</div>
<div class="t" style="left:154px;top:554px;width:174px;height:25px;line-height:25px;">伊斯坦布尔巴萨克塞尔</div>
<div class="t" style="left:329px;top:554px;width:84px;height:25px;line-height:25px;"><span style="color:#cc1c1c">3-1</span>(2-0)</div>
<div class="t" style="left:414px;top:554px;width:35px;height:25px;line-height:25px;">9-6</div>
<div class="t" style="left:450px;top:554px;width:87px;height:25px;line-height:25px;"><span style="color:#1a7d1a;">海登海姆</span></div>
<div class="t" style="left:538px;top:554px;width:45px;height:25px;line-height:25px;">0.92</div>
<div class="t" style="left:584px;top:554px;width:79px;height:25px;line-height:25px;">半球</div>
<div class="t" style="left:664px;top:554px;width:48px;height:25px;line-height:25px;">0.97</div>
<div class="t" style="left:713px;top:554px;width:52px;height:25px;line-height:25px;">2.16</div>
<div class="t" style="left:766px;top:554px;width:66px;height:25px;line-height:25px;">3.45</div>
<div class="t" style="left:833px;top:554px;width:67px;height:25px;line-height:25px;">3.25</div>
<div class="t" style="left:901px;top:554px;width:35px;height:25px;line-height:25px;color:#1818a4;">负</div>
<div class="t" style="left:937px;top:554px;width:35px;height:25px;line-height:25px;color:#1818a4;">输</div>
<div class="t" style="left:973px;top:554px;width:54px;height:25px;line-height:25px;color:#cc1c1c;">大</div>
<div style="left:1px;top:579px;width:80px;height:25px;background:#990099;"></div>
<div style="left:82px;top:579px;width:71px;height:25px;background:#efefef;"></div>
<div style="left:154px;top:579px;width:174px;height:25px;background:#efefef;"></div>
<div style="left:329px;top:579px;width:84px;height:25px;background:#efefef;"></div>
<div style="left:414px;top:579px;width:35px;height:25px;background:#efefef;"></div>
<div style="left:450px;top:579px;width:87px;height:25px;background:#efefef;"></div>
<div style="left:538px;top:579px;width:45px;height:25px;background:#fdf9f6;"></div>
<div style="left:584px;top:579px;width:79px;height:25px;background:#fdf9f6;"></div>
<div style="left:664px;top:579px;width:48px;height:25px;background:#fdf9f6;"></div>
<div style="left:713px;top:579px;width:52px;height:25px;background:#f0f6fb;"></div>
<div style="left:766px;top:579px;width:66px;height:25px;background:#f0f6fb;"></div>
<div style="left:833px;top:579px;width:67px;height:25px;background:#f0f6fb;"></div>
<div style="left:901px;top:579px;width:35px;height:25px;background:#efefef;"></div>
<div style="left:937px;top:579px;width:35px;height:25px;background:#efefef;"></div>
<div style="left:973px;top:579px;width:54px;height:25px;background:#efefef;"></div>
<div class="t" style="left:1px;top:580px;width:80px;height:25px;line-height:25px;color:#fff;-webkit-text-stroke:0.25px #fff;">德甲</div>
<div class="t" style="left:82px;top:580px;width:71px;height:25px;line-height:25px;">24-12-07</div>
<div class="t" style="left:154px;top:580px;width:174px;height:25px;line-height:25px;">拜仁慕尼黑</div>
<div class="t" style="left:329px;top:580px;width:84px;height:25px;line-height:25px;"><span style="color:#cc1c1c">4-2</span>(1-0)</div>
<div class="t" style="left:414px;top:580px;width:35px;height:25px;line-height:25px;">8-0</div>
<div class="t" style="left:450px;top:580px;width:87px;height:25px;line-height:25px;"><span style="color:#1a7d1a;">海登海姆</span></div>
<div class="t" style="left:538px;top:580px;width:45px;height:25px;line-height:25px;">1.05</div>
<div class="t" style="left:584px;top:580px;width:79px;height:25px;line-height:25px;">两球半</div>
<div class="t" style="left:664px;top:580px;width:48px;height:25px;line-height:25px;">0.84</div>
<div class="t" style="left:713px;top:580px;width:52px;height:25px;line-height:25px;">1.10</div>
<div class="t" style="left:766px;top:580px;width:66px;height:25px;line-height:25px;">10.42</div>
<div class="t" style="left:833px;top:580px;width:67px;height:25px;line-height:25px;">21.35</div>
<div class="t" style="left:901px;top:580px;width:35px;height:25px;line-height:25px;color:#1818a4;">负</div>
<div class="t" style="left:937px;top:580px;width:35px;height:25px;line-height:25px;color:#cc1c1c;">赢</div>
<div class="t" style="left:973px;top:580px;width:54px;height:25px;line-height:25px;color:#cc1c1c;">大</div>
<div style="left:1px;top:605px;width:80px;height:25px;background:#990099;"></div>
<div style="left:82px;top:605px;width:71px;height:25px;background:#ffffff;"></div>
<div style="left:154px;top:605px;width:174px;height:25px;background:#ffffff;"></div>
<div style="left:329px;top:605px;width:84px;height:25px;background:#ffffff;"></div>
<div style="left:414px;top:605px;width:35px;height:25px;background:#ffffff;"></div>
<div style="left:450px;top:605px;width:87px;height:25px;background:#ffffff;"></div>
<div style="left:538px;top:605px;width:45px;height:25px;background:#fdf9f6;"></div>
<div style="left:584px;top:605px;width:79px;height:25px;background:#fdf9f6;"></div>
<div style="left:664px;top:605px;width:48px;height:25px;background:#fdf9f6;"></div>
<div style="left:713px;top:605px;width:52px;height:25px;background:#f0f6fb;"></div>
<div style="left:766px;top:605px;width:66px;height:25px;background:#f0f6fb;"></div>
<div style="left:833px;top:605px;width:67px;height:25px;background:#f0f6fb;"></div>
<div style="left:901px;top:605px;width:35px;height:25px;background:#ffffff;"></div>
<div style="left:937px;top:605px;width:35px;height:25px;background:#ffffff;"></div>
<div style="left:973px;top:605px;width:54px;height:25px;background:#ffffff;"></div>
<div class="t" style="left:1px;top:606px;width:80px;height:25px;line-height:25px;color:#fff;-webkit-text-stroke:0.25px #fff;">德甲</div>
<div class="t" style="left:82px;top:606px;width:71px;height:25px;line-height:25px;">24-12-02</div>
<div class="t" style="left:154px;top:606px;width:174px;height:25px;line-height:25px;"><span style="color:#1a7d1a;">海登海姆</span></div>
<div class="t" style="left:329px;top:606px;width:84px;height:25px;line-height:25px;"><span style="color:#cc1c1c">0-4</span>(0-1)</div>
<div class="t" style="left:414px;top:606px;width:35px;height:25px;line-height:25px;">6-5</div>
<div class="t" style="left:450px;top:606px;width:87px;height:25px;line-height:25px;">法兰克福</div>
<div class="t" style="left:538px;top:606px;width:45px;height:25px;line-height:25px;">0.91</div>
<div class="t" style="left:584px;top:606px;width:79px;height:25px;line-height:25px;">受半球</div>
<div class="t" style="left:664px;top:606px;width:48px;height:25px;line-height:25px;">0.98</div>
<div class="t" style="left:713px;top:606px;width:52px;height:25px;line-height:25px;">3.81</div>
<div class="t" style="left:766px;top:606px;width:66px;height:25px;line-height:25px;">3.65</div>
<div class="t" style="left:833px;top:606px;width:67px;height:25px;line-height:25px;">1.92</div>
<div class="t" style="left:901px;top:606px;width:35px;height:25px;line-height:25px;color:#1818a4;">负</div>
<div class="t" style="left:937px;top:606px;width:35px;height:25px;line-height:25px;color:#1818a4;">输</div>
<div class="t" style="left:973px;top:606px;width:54px;height:25px;line-height:25px;color:#cc1c1c;">大</div>
<div style="left:1px;top:631px;width:80px;height:25px;background:#cc77dd;"></div>
<div style="left:82px;top:631px;width:71px;height:25px;background:#efefef;"></div>
<div style="left:154px;top:631px;width:174px;height:25px;background:#efefef;"></div>
<div style="left:329px;top:631px;width:84px;height:25px;background:#efefef;"></div>
<div style="left:414px;top:631px;width:35px;height:25px;background:#efefef;"></div>
<div style="left:450px;top:631px;width:87px;height:25px;background:#efefef;"></div>
<div style="left:538px;top:631px;width:45px;height:25px;background:#fdf9f6;"></div>
<div style="left:584px;top:631px;width:79px;height:25px;background:#fdf9f6;"></div>
<div style="left:664px;top:631px;width:48px;height:25px;background:#fdf9f6;"></div>
<div style="left:713px;top:631px;width:52px;height:25px;background:#f0f6fb;"></div>
<div style="left:766px;top:631px;width:66px;height:25px;background:#f0f6fb;"></div>
<div style="left:833px;top:631px;width:67px;height:25px;background:#f0f6fb;"></div>
<div style="left:901px;top:631px;width:35px;height:25px;background:#efefef;"></div>
<div style="left:937px;top:631px;width:35px;height:25px;background:#efefef;"></div>
<div style="left:973px;top:631px;width:54px;height:25px;background:#efefef;"></div>
<div class="t" style="left:1px;top:632px;width:80px;height:25px;line-height:25px;color:#fff;-webkit-text-stroke:0.25px #fff;">欧会杯</div>
<div class="t" style="left:82px;top:632px;width:71px;height:25px;line-height:25px;">24-11-29</div>
<div class="t" style="left:154px;top:632px;width:174px;height:25px;line-height:25px;"><span style="color:#1a7d1a;">海登海姆</span></div>
<div class="t" style="left:329px;top:632px;width:84px;height:25px;line-height:25px;"><span style="color:#cc1c1c">0-2</span>(0-0)</div>
<div class="t" style="left:414px;top:632px;width:35px;height:25px;line-height:25px;">3-6</div>
<div class="t" style="left:450px;top:632px;width:87px;height:25px;line-height:25px;"><span style="">切尔西</span><span class="bd">1</span></div>
<div class="t" style="left:538px;top:632px;width:45px;height:25px;line-height:25px;">0.80</div>
<div class="t" style="left:584px;top:632px;width:79px;height:25px;line-height:25px;">受一球</div>
<div class="t" style="left:664px;top:632px;width:48px;height:25px;line-height:25px;">1.08</div>
<div class="t" style="left:713px;top:632px;width:52px;height:25px;line-height:25px;">5.74</div>
<div class="t" style="left:766px;top:632px;width:66px;height:25px;line-height:25px;">4.55</div>
<div class="t" style="left:833px;top:632px;width:67px;height:25px;line-height:25px;">1.50</div>
<div class="t" style="left:901px;top:632px;width:35px;height:25px;line-height:25px;color:#1818a4;">负</div>
<div class="t" style="left:937px;top:632px;width:35px;height:25px;line-height:25px;color:#1818a4;">输</div>
<div class="t" style="left:973px;top:632px;width:54px;height:25px;line-height:25px;color:#1818a4;">小</div>
<div style="left:1px;top:657px;width:80px;height:25px;background:#990099;"></div>
<div style="left:82px;top:657px;width:71px;height:25px;background:#ffffff;"></div>
<div style="left:154px;top:657px;width:174px;height:25px;background:#ffffff;"></div>
<div style="left:329px;top:657px;width:84px;height:25px;background:#ffffff;"></div>
<div style="left:414px;top:657px;width:35px;height:25px;background:#ffffff;"></div>
<div style="left:450px;top:657px;width:87px;height:25px;background:#ffffff;"></div>
<div style="left:538px;top:657px;width:45px;height:25px;background:#fdf9f6;"></div>
<div style="left:584px;top:657px;width:79px;height:25px;background:#fdf9f6;"></div>
<div style="left:664px;top:657px;width:48px;height:25px;background:#fdf9f6;"></div>
<div style="left:713px;top:657px;width:52px;height:25px;background:#f0f6fb;"></div>
<div style="left:766px;top:657px;width:66px;height:25px;background:#f0f6fb;"></div>
<div style="left:833px;top:657px;width:67px;height:25px;background:#f0f6fb;"></div>
<div style="left:901px;top:657px;width:35px;height:25px;background:#ffffff;"></div>
<div style="left:937px;top:657px;width:35px;height:25px;background:#ffffff;"></div>
<div style="left:973px;top:657px;width:54px;height:25px;background:#ffffff;"></div>
<div class="t" style="left:1px;top:658px;width:80px;height:25px;line-height:25px;color:#fff;-webkit-text-stroke:0.25px #fff;">德甲</div>
<div class="t" style="left:82px;top:658px;width:71px;height:25px;line-height:25px;">24-11-23</div>
<div class="t" style="left:154px;top:658px;width:174px;height:25px;line-height:25px;">勒沃库森</div>
<div class="t" style="left:329px;top:658px;width:84px;height:25px;line-height:25px;"><span style="color:#cc1c1c">5-2</span>(2-2)</div>
<div class="t" style="left:414px;top:658px;width:35px;height:25px;line-height:25px;">6-0</div>
<div class="t" style="left:450px;top:658px;width:87px;height:25px;line-height:25px;"><span style="color:#1a7d1a;">海登海姆</span></div>
<div class="t" style="left:538px;top:658px;width:45px;height:25px;line-height:25px;">1.08</div>
<div class="t" style="left:584px;top:658px;width:79px;height:25px;line-height:25px;">两球</div>
<div class="t" style="left:664px;top:658px;width:48px;height:25px;line-height:25px;">0.81</div>
<div class="t" style="left:713px;top:658px;width:52px;height:25px;line-height:25px;">1.19</div>
<div class="t" style="left:766px;top:658px;width:66px;height:25px;line-height:25px;">7.07</div>
<div class="t" style="left:833px;top:658px;width:67px;height:25px;line-height:25px;">13.41</div>
<div class="t" style="left:901px;top:658px;width:35px;height:25px;line-height:25px;color:#1818a4;">负</div>
<div class="t" style="left:937px;top:658px;width:35px;height:25px;line-height:25px;color:#1818a4;">输</div>
<div class="t" style="left:973px;top:658px;width:54px;height:25px;line-height:25px;color:#cc1c1c;">大</div>
<div style="left:1px;top:683px;width:80px;height:25px;background:#990099;"></div>
<div style="left:82px;top:683px;width:71px;height:25px;background:#efefef;"></div>
<div style="left:154px;top:683px;width:174px;height:25px;background:#efefef;"></div>
<div style="left:329px;top:683px;width:84px;height:25px;background:#efefef;"></div>
<div style="left:414px;top:683px;width:35px;height:25px;background:#efefef;"></div>
<div style="left:450px;top:683px;width:87px;height:25px;background:#efefef;"></div>
<div style="left:538px;top:683px;width:45px;height:25px;background:#fdf9f6;"></div>
<div style="left:584px;top:683px;width:79px;height:25px;background:#fdf9f6;"></div>
<div style="left:664px;top:683px;width:48px;height:25px;background:#fdf9f6;"></div>
<div style="left:713px;top:683px;width:52px;height:25px;background:#f0f6fb;"></div>
<div style="left:766px;top:683px;width:66px;height:25px;background:#f0f6fb;"></div>
<div style="left:833px;top:683px;width:67px;height:25px;background:#f0f6fb;"></div>
<div style="left:901px;top:683px;width:35px;height:25px;background:#efefef;"></div>
<div style="left:937px;top:683px;width:35px;height:25px;background:#efefef;"></div>
<div style="left:973px;top:683px;width:54px;height:25px;background:#efefef;"></div>
<div class="t" style="left:1px;top:684px;width:80px;height:25px;line-height:25px;color:#fff;-webkit-text-stroke:0.25px #fff;">德甲</div>
<div class="t" style="left:82px;top:684px;width:71px;height:25px;line-height:25px;">24-11-11</div>
<div class="t" style="left:154px;top:684px;width:174px;height:25px;line-height:25px;"><span style="color:#1a7d1a;">海登海姆</span></div>
<div class="t" style="left:329px;top:684px;width:84px;height:25px;line-height:25px;"><span style="color:#cc1c1c">1-3</span>(0-2)</div>
<div class="t" style="left:414px;top:684px;width:35px;height:25px;line-height:25px;">5-5</div>
<div class="t" style="left:450px;top:684px;width:87px;height:25px;line-height:25px;">沃尔夫斯堡</div>
<div class="t" style="left:538px;top:684px;width:45px;height:25px;line-height:25px;">1.07</div>
<div class="t" style="left:584px;top:684px;width:79px;height:25px;line-height:25px;">平手</div>
<div class="t" style="left:664px;top:684px;width:48px;height:25px;line-height:25px;">0.82</div>
<div class="t" style="left:713px;top:684px;width:52px;height:25px;line-height:25px;">2.85</div>
<div class="t" style="left:766px;top:684px;width:66px;height:25px;line-height:25px;">3.25</div>
<div class="t" style="left:833px;top:684px;width:67px;height:25px;line-height:25px;">2.51</div>
<div class="t" style="left:901px;top:684px;width:35px;height:25px;line-height:25px;color:#1818a4;">负</div>
<div class="t" style="left:937px;top:684px;width:35px;height:25px;line-height:25px;color:#1818a4;">输</div>
<div class="t" style="left:973px;top:684px;width:54px;height:25px;line-height:25px;color:#cc1c1c;">大</div>
<div style="left:1px;top:709px;width:1026px;height:25px;background:#fff;"></div>
<div class="t" style="left:1px;top:710px;width:1026px;height:25px;line-height:25px;letter-spacing:0.22px;">近<span style="color:#cc1c1c">10</span>场,胜1平1负8, 胜率:<span style="color:#cc1c1c">10%</span> 让胜率:<span style="color:#cc1c1c">20%</span> 大率:<span style="color:#cc1c1c">60%</span> 单率:<span style="color:#cc1c1c">10%</span></div>
<div style="left:0px;top:409px;width:1028px;height:1px;background:#c0c0c0;"></div>
<div style="left:0px;top:448px;width:1028px;height:1px;background:#c0c0c0;"></div>
<div style="left:537px;top:429px;width:491px;height:1px;background:#c0c0c0;"></div>
<div style="left:0px;top:474px;width:1028px;height:1px;background:#c0c0c0;"></div>
<div style="left:0px;top:500px;width:1028px;height:1px;background:#c0c0c0;"></div>
<div style="left:0px;top:526px;width:1028px;height:1px;background:#c0c0c0;"></div>
<div style="left:0px;top:552px;width:1028px;height:1px;background:#c0c0c0;"></div>
<div style="left:0px;top:578px;width:1028px;height:1px;background:#c0c0c0;"></div>
<div style="left:0px;top:604px;width:1028px;height:1px;background:#c0c0c0;"></div>
<div style="left:0px;top:630px;width:1028px;height:1px;background:#c0c0c0;"></div>
<div style="left:0px;top:656px;width:1028px;height:1px;background:#c0c0c0;"></div>
<div style="left:0px;top:682px;width:1028px;height:1px;background:#c0c0c0;"></div>
<div style="left:0px;top:708px;width:1028px;height:1px;background:#c0c0c0;"></div>
<div style="left:0px;top:734px;width:1028px;height:1px;background:#c0c0c0;"></div>
<div style="left:0px;top:409px;width:1px;height:326px;background:#c0c0c0;"></div>
<div style="left:1027px;top:409px;width:1px;height:326px;background:#c0c0c0;"></div>
<div style="left:81px;top:409px;width:1px;height:300px;background:#c0c0c0;"></div>
<div style="left:153px;top:409px;width:1px;height:300px;background:#c0c0c0;"></div>
<div style="left:328px;top:409px;width:1px;height:300px;background:#c0c0c0;"></div>
<div style="left:413px;top:409px;width:1px;height:300px;background:#c0c0c0;"></div>
<div style="left:449px;top:409px;width:1px;height:300px;background:#c0c0c0;"></div>
<div style="left:537px;top:409px;width:1px;height:300px;background:#c0c0c0;"></div>
<div style="left:583px;top:429px;width:1px;height:280px;background:#c0c0c0;"></div>
<div style="left:663px;top:429px;width:1px;height:280px;background:#c0c0c0;"></div>
<div style="left:712px;top:409px;width:1px;height:300px;background:#c0c0c0;"></div>
<div style="left:765px;top:429px;width:1px;height:280px;background:#c0c0c0;"></div>
<div style="left:832px;top:429px;width:1px;height:280px;background:#c0c0c0;"></div>
<div style="left:900px;top:409px;width:1px;height:300px;background:#c0c0c0;"></div>
<div style="left:936px;top:429px;width:1px;height:280px;background:#c0c0c0;"></div>
<div style="left:972px;top:429px;width:1px;height:280px;background:#c0c0c0;"></div>
<div style="left:0px;top:448px;width:82px;height:1px;background:#ffffff;"></div>
<div style="left:0px;top:474px;width:82px;height:1px;background:#ffffff;"></div>
<div style="left:0px;top:448px;width:1px;height:27px;background:#ffffff;"></div>
<div style="left:81px;top:448px;width:1px;height:27px;background:#ffffff;"></div>
<div style="left:0px;top:474px;width:82px;height:1px;background:#ffffff;"></div>
<div style="left:0px;top:500px;width:82px;height:1px;background:#ffffff;"></div>
<div style="left:0px;top:474px;width:1px;height:27px;background:#ffffff;"></div>
<div style="left:81px;top:474px;width:1px;height:27px;background:#ffffff;"></div>
<div style="left:0px;top:500px;width:82px;height:1px;background:#ffffff;"></div>
<div style="left:0px;top:526px;width:82px;height:1px;background:#ffffff;"></div>
<div style="left:0px;top:500px;width:1px;height:27px;background:#ffffff;"></div>
<div style="left:81px;top:500px;width:1px;height:27px;background:#ffffff;"></div>
<div style="left:0px;top:526px;width:82px;height:1px;background:#ffffff;"></div>
<div style="left:0px;top:552px;width:82px;height:1px;background:#ffffff;"></div>
<div style="left:0px;top:526px;width:1px;height:27px;background:#ffffff;"></div>
<div style="left:81px;top:526px;width:1px;height:27px;background:#ffffff;"></div>
<div style="left:0px;top:552px;width:82px;height:1px;background:#ffffff;"></div>
<div style="left:0px;top:578px;width:82px;height:1px;background:#ffffff;"></div>
<div style="left:0px;top:552px;width:1px;height:27px;background:#ffffff;"></div>
<div style="left:81px;top:552px;width:1px;height:27px;background:#ffffff;"></div>
<div style="left:0px;top:578px;width:82px;height:1px;background:#ffffff;"></div>
<div style="left:0px;top:604px;width:82px;height:1px;background:#ffffff;"></div>
<div style="left:0px;top:578px;width:1px;height:27px;background:#ffffff;"></div>
<div style="left:81px;top:578px;width:1px;height:27px;background:#ffffff;"></div>
<div style="left:0px;top:604px;width:82px;height:1px;background:#ffffff;"></div>
<div style="left:0px;top:630px;width:82px;height:1px;background:#ffffff;"></div>
<div style="left:0px;top:604px;width:1px;height:27px;background:#ffffff;"></div>
<div style="left:81px;top:604px;width:1px;height:27px;background:#ffffff;"></div>
<div style="left:0px;top:630px;width:82px;height:1px;background:#ffffff;"></div>
<div style="left:0px;top:656px;width:82px;height:1px;background:#ffffff;"></div>
<div style="left:0px;top:630px;width:1px;height:27px;background:#ffffff;"></div>
<div style="left:81px;top:630px;width:1px;height:27px;background:#ffffff;"></div>
<div style="left:0px;top:656px;width:82px;height:1px;background:#ffffff;"></div>
<div style="left:0px;top:682px;width:82px;height:1px;background:#ffffff;"></div>
<div style="left:0px;top:656px;width:1px;height:27px;background:#ffffff;"></div>
<div style="left:81px;top:656px;width:1px;height:27px;background:#ffffff;"></div>
<div style="left:0px;top:682px;width:82px;height:1px;background:#ffffff;"></div>
<div style="left:0px;top:708px;width:82px;height:1px;background:#ffffff;"></div>
<div style="left:0px;top:682px;width:1px;height:27px;background:#ffffff;"></div>
<div style="left:81px;top:682px;width:1px;height:27px;background:#ffffff;"></div>
<div style="left:547px;top:59px;width:61px;height:19px;background:#fff;border:1px solid #767676;box-sizing:border-box;border-radius:2px;"></div>
<div class="t" style="left:552px;top:59px;height:19px;line-height:19px;font-size:13px;color:#000;text-align:left;">Crow*</div>
<svg style="position:absolute;left:593px;top:66px" width="10" height="6" viewBox="0 0 10 6"><path d="M1 1 L5 5 L9 1" fill="none" stroke="#000" stroke-width="2"/></svg>
<div style="left:616px;top:59px;width:51px;height:19px;background:#fff;border:1px solid #767676;box-sizing:border-box;border-radius:2px;"></div>
<div class="t" style="left:620px;top:59px;height:19px;line-height:19px;font-size:13px;color:#000;text-align:left;">终指</div>
<svg style="position:absolute;left:652px;top:66px" width="10" height="6" viewBox="0 0 10 6"><path d="M1 1 L5 5 L9 1" fill="none" stroke="#000" stroke-width="2"/></svg>
<div style="left:732px;top:59px;width:70px;height:19px;background:#fff;border:1px solid #767676;box-sizing:border-box;border-radius:2px;"></div>
<div class="t" style="left:737px;top:59px;height:19px;line-height:19px;font-size:13px;color:#000;text-align:left;">平均值</div>
<svg style="position:absolute;left:787px;top:66px" width="10" height="6" viewBox="0 0 10 6"><path d="M1 1 L5 5 L9 1" fill="none" stroke="#000" stroke-width="2"/></svg>
<div style="left:810px;top:59px;width:51px;height:19px;background:#fff;border:1px solid #767676;box-sizing:border-box;border-radius:2px;"></div>
<div class="t" style="left:814px;top:59px;height:19px;line-height:19px;font-size:13px;color:#000;text-align:left;">终指</div>
<svg style="position:absolute;left:846px;top:66px" width="10" height="6" viewBox="0 0 10 6"><path d="M1 1 L5 5 L9 1" fill="none" stroke="#000" stroke-width="2"/></svg>
<div style="left:936px;top:59px;width:51px;height:19px;background:#fff;border:1px solid #767676;box-sizing:border-box;border-radius:2px;"></div>
<div class="t" style="left:941px;top:59px;height:19px;line-height:19px;font-size:13px;color:#000;text-align:left;">全场</div>
<svg style="position:absolute;left:972px;top:66px" width="10" height="6" viewBox="0 0 10 6"><path d="M1 1 L5 5 L9 1" fill="none" stroke="#000" stroke-width="2"/></svg>
<div style="left:565px;top:410px;width:61px;height:19px;background:#fff;border:1px solid #767676;box-sizing:border-box;border-radius:2px;"></div>
<div class="t" style="left:570px;top:410px;height:19px;line-height:19px;font-size:13px;color:#000;text-align:left;">Crow*</div>
<svg style="position:absolute;left:611px;top:417px" width="10" height="6" viewBox="0 0 10 6"><path d="M1 1 L5 5 L9 1" fill="none" stroke="#000" stroke-width="2"/></svg>
<div style="left:633px;top:410px;width:51px;height:19px;background:#fff;border:1px solid #767676;box-sizing:border-box;border-radius:2px;"></div>
<div class="t" style="left:637px;top:410px;height:19px;line-height:19px;font-size:13px;color:#000;text-align:left;">终指</div>
<svg style="position:absolute;left:669px;top:417px" width="10" height="6" viewBox="0 0 10 6"><path d="M1 1 L5 5 L9 1" fill="none" stroke="#000" stroke-width="2"/></svg>
<div style="left:742px;top:410px;width:70px;height:19px;background:#fff;border:1px solid #767676;box-sizing:border-box;border-radius:2px;"></div>
<div class="t" style="left:747px;top:410px;height:19px;line-height:19px;font-size:13px;color:#000;text-align:left;">平均值</div>
<svg style="position:absolute;left:797px;top:417px" width="10" height="6" viewBox="0 0 10 6"><path d="M1 1 L5 5 L9 1" fill="none" stroke="#000" stroke-width="2"/></svg>
<div style="left:819px;top:410px;width:51px;height:19px;background:#fff;border:1px solid #767676;box-sizing:border-box;border-radius:2px;"></div>
<div class="t" style="left:823px;top:410px;height:19px;line-height:19px;font-size:13px;color:#000;text-align:left;">终指</div>
<svg style="position:absolute;left:855px;top:417px" width="10" height="6" viewBox="0 0 10 6"><path d="M1 1 L5 5 L9 1" fill="none" stroke="#000" stroke-width="2"/></svg>
<div style="left:938px;top:410px;width:51px;height:19px;background:#fff;border:1px solid #767676;box-sizing:border-box;border-radius:2px;"></div>
<div class="t" style="left:943px;top:410px;height:19px;line-height:19px;font-size:13px;color:#000;text-align:left;">全场</div>
<svg style="position:absolute;left:974px;top:417px" width="10" height="6" viewBox="0 0 10 6"><path d="M1 1 L5 5 L9 1" fill="none" stroke="#000" stroke-width="2"/></svg></body></html>
